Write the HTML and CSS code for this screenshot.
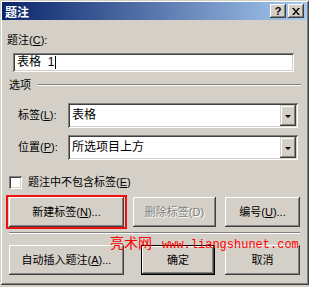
FILE: index.html
```html
<!DOCTYPE html>
<html lang="zh">
<head>
<meta charset="utf-8">
<title>题注</title>
<link rel="stylesheet" href="styles.css">
</head>
<body>
<div class="window">
  <div class="titlebar">
    <span class="title">题注</span>
    <div class="tb-buttons">
      <span class="tbtn help">?</span>
      <span class="tbtn">
        <svg width="8" height="7" viewBox="0 0 8 7"><path d="M0 0h2l2 2.5 2-2.5h2l-3 3.5 3 3.5h-2l-2-2.5-2 2.5h-2l3-3.5z" fill="#000"/></svg>
      </span>
    </div>
  </div>
  <div class="content">
    <div class="cap-label">题注(<u>C</u>):</div>
    <div class="textbox">表格&nbsp;&nbsp;1<span class="caret"></span></div>
    <div class="group"><span>选项</span><span class="rule"></span></div>
    <div class="field first">
      <span class="flabel">标签(<u>L</u>):</span>
      <div class="combo"><span class="cval">表格</span><span class="drop"><span class="tri"></span></span></div>
    </div>
    <div class="field">
      <span class="flabel">位置(<u>P</u>):</span>
      <div class="combo"><span class="cval">所选项目上方</span><span class="drop"><span class="tri"></span></span></div>
    </div>
    <div class="check"><span class="box"></span><span>题注中不包含标签(<u>E</u>)</span></div>
    <div class="btnrow">
      <span class="btn w115">新建标签(<u>N</u>)...</span>
      <span class="btn w83 disabled">删除标签(D)</span>
      <span class="btn w75">编号(<u>U</u>)...</span>
    </div>
    <div class="sep"></div>
    <div class="btnrow row2">
      <span class="btn w115">自动插入题注(<u>A</u>)...</span>
      <span class="btn default">确定</span>
      <span class="btn w75">取消</span>
    </div>
  </div>
  <div class="redbox"></div>
  <div class="mark"><span class="mark-cn">亮术网</span><span class="mark-url">www.liangshunet.com</span></div>
</div>
</body>
</html>
```
FILE: styles.css
```css
* { box-sizing: border-box; }
body {
  margin: 0;
  width: 309px;
  height: 287px;
  overflow: hidden;
  background: #d4d0c8;
  font: 11px/13px "Liberation Sans", "Noto Sans CJK SC", sans-serif;
  color: #000;
}
u { text-decoration: underline; text-underline-offset: 1px; }
.window {
  position: relative;
  width: 309px;
  height: 285px;
  padding: 2px;
  background: #d4d0c8;
  box-shadow: inset 1px 1px #d4d0c8, inset -1px -1px #404040, inset 2px 2px #fff, inset -2px -2px #808080;
  display: flex;
  flex-direction: column;
}
.titlebar {
  height: 18px;
  flex: none;
  background: linear-gradient(to right, #0a246a, #a6caf0);
  display: flex;
  align-items: center;
  padding: 0 3px 0 3px;
}
.title {
  flex: 1;
  color: #fff;
  font-weight: bold;
  font-size: 12px;
  font-family: "Noto Sans CJK SC", sans-serif;
}
.tb-buttons { display: flex; gap: 2px; }
.tbtn {
  width: 16px;
  height: 14px;
  background: #d4d0c8;
  box-shadow: inset -1px -1px #404040, inset 1px 1px #fff, inset -2px -2px #808080;
  display: flex;
  align-items: center;
  justify-content: center;
}
.help { font-weight: bold; font-size: 11px; line-height: 14px; }
.content { display: flex; flex-direction: column; }
.cap-label { margin: 13px 0 0 5px; line-height: 14px; }
.sunken {
}
.textbox, .combo, .box {
  background: #fff;
  box-shadow: inset 1px 1px #808080, inset -1px -1px #fff, inset 2px 2px #404040, inset -2px -2px #d4d0c8;
}
.textbox {
  margin: 6px 0 0 11px;
  width: 281px;
  height: 19px;
  padding: 3px 0 0 4px;
  line-height: 13px;
  font-size: 12px;
  display: flex;
  align-items: flex-start;
}
.caret { width: 1px; height: 13px; background: #000; margin-left: 1px; }
.group {
  margin: 6px 6px 0 7px;
  display: flex;
  align-items: center;
  line-height: 14px;
}
.rule {
  flex: 1;
  margin-left: 7px;
  height: 2px;
  border-top: 1px solid #808080;
  border-bottom: 1px solid #fff;
}
.field {
  margin: 7px 0 0 16px;
  display: flex;
  align-items: center;
}
.field.first { margin-top: 11px; }
.flabel { width: 50px; }
.combo {
  width: 230px;
  height: 25px;
  padding: 2px;
  display: flex;
  align-items: center;
}
.cval { flex: 1; padding-left: 2px; font-size: 12px; }
.drop {
  width: 16px;
  height: 21px;
  background: #d4d0c8;
  box-shadow: inset -1px -1px #404040, inset 1px 1px #d4d0c8, inset -2px -2px #808080, inset 2px 2px #fff;
  display: flex;
  align-items: center;
  justify-content: center;
}
.tri {
  width: 0;
  height: 0;
  border-left: 3px solid transparent;
  border-right: 3px solid transparent;
  border-top: 3px solid #000;
  margin-top: 1px;
}
.check {
  margin: 16px 0 0 7px;
  display: flex;
  align-items: center;
  gap: 6px;
  line-height: 13px;
}
.box { width: 13px; height: 13px; }
.btnrow {
  margin: 8px 0 0 7px;
  display: flex;
  gap: 9px;
}
.row2 { margin-top: 11px; }
.btn {
  height: 30px;
  background: #d4d0c8;
  box-shadow: inset -1px -1px #404040, inset 1px 1px #fff, inset -2px -2px #808080, inset 2px 2px #d4d0c8;
  display: flex;
  align-items: center;
  justify-content: center;
}
.w115 { width: 115px; }
.w83 { width: 83px; }
.w75 { width: 75px; }
.disabled { color: #808080; text-shadow: 1px 1px #fff; }
.default {
  width: 74px;
  margin: 0 1px 0 8px;
  border: 1px solid #000;
}
.sep {
  margin: 5px 7px 0 7px;
  height: 2px;
  border-top: 1px solid #808080;
  border-bottom: 1px solid #fff;
}
.redbox {
  position: absolute;
  left: 6px;
  top: 195px;
  width: 121px;
  height: 34px;
  border: 2px solid #f01010;
}
.mark {
  position: absolute;
  left: 110px;
  top: 234px;
  color: #f00;
  display: flex;
  align-items: baseline;
  white-space: nowrap;
}
.mark-cn { font: 14px/16px "Noto Sans CJK SC", sans-serif; width: 52px; }
.mark-url { font: 12px/16px "Liberation Mono", monospace; }
```
